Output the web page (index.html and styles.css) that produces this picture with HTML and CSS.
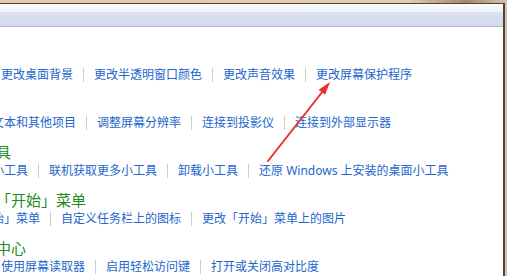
FILE: index.html
```html
<!DOCTYPE html>
<html lang="zh-CN">
<head>
<meta charset="utf-8">
<link rel="stylesheet" href="styles.css">
</head>
<body>
<div class="window">
  <div class="toolbar"></div>
  <div class="content">
    <div class="group">
      <div class="group-title">个性化</div>
      <div class="links">
        <span class="link">更改主题</span><span class="sep"></span>
        <span class="link">更改桌面背景</span><span class="sep"></span>
        <span class="link">更改半透明窗口颜色</span><span class="sep"></span>
        <span class="link">更改声音效果</span><span class="sep"></span>
        <span class="link">更改屏幕保护程序</span>
      </div>
    </div>
    <div class="group">
      <div class="group-title">显示</div>
      <div class="links">
        <span class="link">放大或缩小文本和其他项目</span><span class="sep"></span>
        <span class="link">调整屏幕分辨率</span><span class="sep"></span>
        <span class="link">连接到投影仪</span><span class="sep"></span>
        <span class="link">连接到外部显示器</span>
      </div>
    </div>
    <div class="group">
      <div class="group-title">桌面小工具</div>
      <div class="links">
        <span class="link">向桌面添加小工具</span><span class="sep"></span>
        <span class="link">联机获取更多小工具</span><span class="sep"></span>
        <span class="link">卸载小工具</span><span class="sep"></span>
        <span class="link">还原 Windows 上安装的桌面小工具</span>
      </div>
    </div>
    <div class="group">
      <div class="group-title">任务栏和「开始」菜单</div>
      <div class="links">
        <span class="link">自定义「开始」菜单</span><span class="sep"></span>
        <span class="link">自定义任务栏上的图标</span><span class="sep"></span>
        <span class="link">更改「开始」菜单上的图片</span>
      </div>
    </div>
    <div class="group">
      <div class="group-title">轻松访问中心</div>
      <div class="links">
        <span class="link">适应弱视</span><span class="sep"></span>
        <span class="link">使用屏幕读取器</span><span class="sep"></span>
        <span class="link">启用轻松访问键</span><span class="sep"></span>
        <span class="link">打开或关闭高对比度</span>
      </div>
    </div>
  </div>
</div>
<svg class="arrow" width="507" height="276" viewBox="0 0 507 276">
  <line x1="268" y1="161" x2="323" y2="91" stroke="#e8322a" stroke-width="2" stroke-linecap="round"/>
  <polygon points="330,82 325.1,94.8 318.7,89.8" fill="#e8322a"/>
</svg>
</body>
</html>
```

FILE: styles.css
```css
html, body {
  margin: 0;
  padding: 0;
}
body {
  position: relative;
  width: 507px;
  height: 276px;
  overflow: hidden;
  background: linear-gradient(to right, #e2c7ab 0, #e6ceb5 80%, #a48670 92%, #d8c2ac 100%);
  font-family: "Noto Sans", "Noto Sans CJK SC", "Microsoft YaHei", sans-serif;
}
.window {
  margin-top: 3px;
  width: 503px;
  height: 272px;
  background: #ffffff;
  border-top: 1px solid #4f4237;
  border-right: 2px solid #4f4237;
  overflow: hidden;
}
.toolbar {
  height: 22px;
  background: linear-gradient(to bottom, #fbfcfe 0, #eef1f9 8px, #d9e0f1 8px, #d3dbed 22px);
  border-bottom: 1px solid #afb9cc;
}
.content {
  margin-left: -68px;
  padding-top: 19px;
}
.group {
  margin-bottom: 10px;
}
.group-title {
  height: 20px;
  line-height: 20px;
  font-size: 15px;
  color: #238a1c;
  padding-left: 4px;
  white-space: nowrap;
}
.links {
  display: flex;
  align-items: center;
  height: 18px;
  line-height: 18px;
  font-size: 12px;
  white-space: nowrap;
}
.link {
  flex: none;
  color: #2266cc;
}
.sep {
  flex: none;
  width: 1px;
  height: 14px;
  margin: 0 10px;
  background: #cdcdcd;
}
.arrow {
  position: absolute;
  left: 0;
  top: 0;
}
```
